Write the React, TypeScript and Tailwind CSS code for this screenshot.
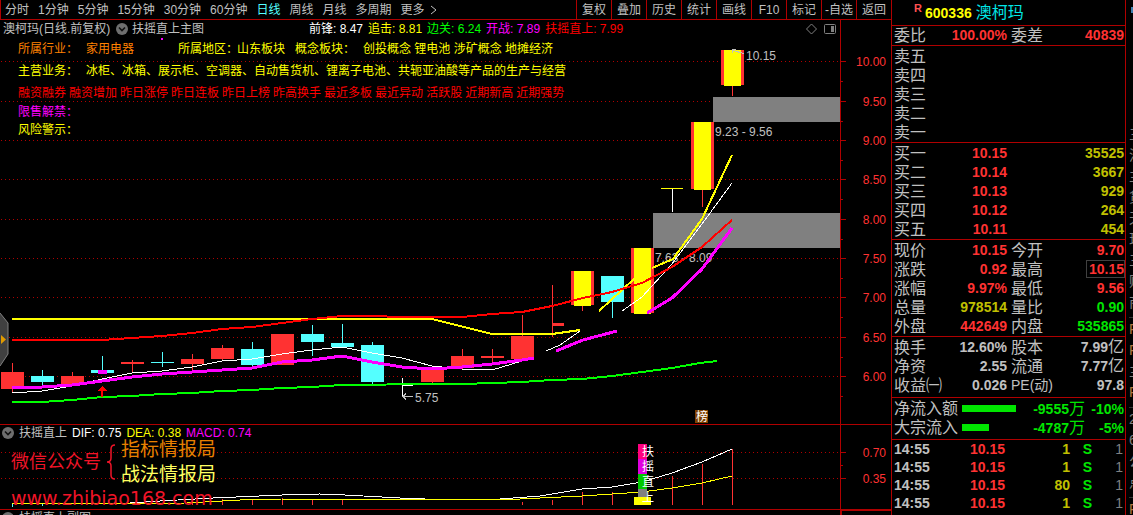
import React from 'react';

const periods = ['分时', '1分钟', '5分钟', '15分钟', '30分钟', '60分钟', '日线', '周线', '月线', '多周期', '更多'];
const tools = ['复权', '叠加', '历史', '统计', '画线', 'F10', '标记', '-自选', '返回'];

const tags = [
  '融资融券', '融资增加', '昨日涨停', '昨日连板', '昨日上榜', '昨高换手',
  '最近多板', '最近异动', '活跃股', '近期新高', '近期强势',
];

const RED = '#ff3232';
const CYAN = '#54ffff';
const LINE = '#b00000';

// cx, body top, body bottom, wick top, wick bottom, colour
type Candle = [number, number, number, number, number, string];

const candles: Candle[] = [
  [12, 372, 389, 363, 393, RED],
  [42, 376, 382, 370, 385, CYAN],
  [72, 376, 385, 372, 385, RED],
  [102, 370, 373, 356, 374, CYAN],
  [132, 362, 364, 360, 373, RED],
  [162, 362, 363, 352, 367, CYAN],
  [192, 359, 364, 354, 371, RED],
  [222, 348, 359, 345, 361, RED],
  [252, 349, 365, 342, 367, CYAN],
  [282, 334, 365, 334, 365, RED],
  [312, 334, 342, 325, 356, CYAN],
  [342, 343, 347, 324, 347, CYAN],
  [372, 345, 382, 342, 384, CYAN],
  [432, 368, 382, 368, 384, RED],
  [462, 356, 368, 349, 370, RED],
  [492, 356, 358, 349, 364, RED],
  [522, 336, 359, 315, 359, RED],
  [582, 271, 305, 271, 311, RED],
  [612, 276, 302, 276, 318, CYAN],
  [642, 248, 313, 248, 313, RED],
  [702, 122, 189, 122, 207, RED],
  [732, 50, 85, 50, 96, RED],
];

// x, top, height of the limit-up bodies
const limitUps = [
  [574, 271, 35],
  [634, 248, 66],
  [694, 122, 68],
  [724, 50, 36],
];

const priceTicks: [number, string][] = [
  [61, '10.00'], [101, '9.50'], [140, '9.00'], [179, '8.50'], [219, '8.00'],
  [258, '7.50'], [297, '7.00'], [337, '6.50'], [376, '6.00'],
];

const mainLines = [
  { color: '#ffff00', width: 2, points: '12,319 432,319 492,334 552,334 580,330' },
  { color: '#ffff00', width: 2, points: '599,311 634,279' },
  { color: '#ffff00', width: 2, points: '652,268 673,259 702,219 732,155' },
  { color: '#00ff00', width: 2, points: '12,402 42,402 72,400 102,397 132,396 162,394 192,393 222,391 252,390 282,388 312,387 342,385 432,384 462,384 522,382 552,380 582,379 612,376 642,372 672,368 700,363 717,361' },
  { color: '#ffffff', width: 1, points: '12,393 42,391 72,386 102,379 132,373 162,371 192,367 222,361 252,359 282,354 312,350 342,347 372,353 402,358 432,366 462,369 492,370 522,361 533,357' },
  { color: '#ffffff', width: 1, points: '546,351 560,345 580,331' },
  { color: '#ffffff', width: 1, points: '622,311 642,297 672,264 702,224 732,183' },
  { color: '#ff0000', width: 2, points: '12,340 102,340 132,338 162,336 192,333 222,329 252,327 282,323 312,319 342,316 372,316 402,317 462,317 492,314 522,312 552,306 583,298 612,292 642,283 672,267 702,247 732,220' },
  { color: '#ff00ff', width: 3, points: '12,388 42,387 72,385 102,381 132,377 162,374 192,372 222,370 252,368 282,362 312,360 342,356 372,362 402,367 432,369 462,367 492,364 522,360 534,358' },
  { color: '#ff00ff', width: 3, points: '556,351 583,340 617,331' },
  { color: '#ff00ff', width: 3, points: '647,313 672,298 702,269 732,228' },
];

const macdBars: [number, number][] = [
  [192, 501], [222, 499], [252, 500], [282, 498], [312, 499], [342, 500], [522, 502],
  [552, 500], [582, 492], [612, 492], [672, 476], [702, 464], [732, 449],
];

function MenuDot() {
  return (
    <svg className="h-3 w-3 shrink-0" viewBox="0 0 12 12">
      <circle cx="6" cy="6" r="6" fill="#6e6e6e" />
      <path d="M3 4.5 6 7.5 9 4.5" fill="none" stroke="#111111" strokeWidth="1.6" />
    </svg>
  );
}

function GridLine({ y }: { y: number }) {
  return <line x1="1" x2="840" y1={y + 0.5} y2={y + 0.5} stroke={LINE} strokeDasharray="1 3" />;
}

function Toolbar() {
  return (
    <nav className="flex h-5 items-stretch justify-between border-b border-l border-[#b00000] text-[#c0c0c0]">
      <div className="flex items-center gap-[9px] whitespace-nowrap pl-1">
        {periods.map((p) => (
          <button key={p} type="button" className={p === '日线' ? 'text-[#54ffff]' : ''}>
            {p}
          </button>
        ))}
        <svg className="-ml-1 h-3 w-2" viewBox="0 0 8 12" fill="none" stroke="#c0c0c0">
          <path d="M1 2 6 6 1 10" />
        </svg>
      </div>
      <div className="flex">
        {tools.map((t) => (
          <button key={t} type="button" className="w-[35px] whitespace-nowrap border-l border-[#b00000] text-center">
            {t}
          </button>
        ))}
      </div>
    </nav>
  );
}

function MainHeader() {
  return (
    <header className="mr-[50px] flex h-[18px] items-center justify-between whitespace-nowrap border-r border-[#b00000] pl-[3px] pr-1">
      <div className="flex items-center text-[#c0c0c0]">
        <h1 className="w-[113px]">澳柯玛(日线.前复权)</h1>
        <MenuDot />
        <span className="ml-1 w-[177px]">扶摇直上主图</span>
        <div className="flex gap-[5px]">
          <span className="text-white">前锋: 8.47</span>
          <span className="text-[#ffff00]">追击: 8.81</span>
          <span className="text-[#00ff00]">边关: 6.24</span>
          <span className="text-[#ff00ff]">开战: 7.89</span>
          <span className="text-[#ff0000]">扶摇直上: 7.99</span>
        </div>
      </div>
      <svg className="h-3 w-[30px]" viewBox="0 0 30 12" fill="none" stroke="#808080">
        <path d="M5.500 1 10.500 6 5.500 11 0.500 6Z" />
        <rect x="18.500" y="1.500" width="11" height="9" rx="1" />
        <rect x="25" y="3" width="3" height="6" fill="#808080" stroke="none" />
      </svg>
    </header>
  );
}

function StockNotes() {
  return (
    <div className="absolute left-[18px] top-px whitespace-nowrap text-[#ffff00]">
      <div className="flex h-5 items-center">
        <span className="w-[68px] text-[#ff8000]">所属行业：</span>
        <span className="w-[92px] text-[#ff8000]">家用电器</span>
        <span className="w-[59px]">所属地区：</span>
        <span className="w-[58px]">山东板块</span>
        <span className="w-[68px]">概念板块：</span>
        <span>创投概念 锂电池 涉矿概念 地摊经济</span>
      </div>
      <div className="flex h-6 items-center">
        <span className="w-[68px]">主营业务：</span>
        <span>冰柜、冰箱、展示柜、空调器、自动售货机、锂离子电池、共轭亚油酸等产品的生产与经营</span>
      </div>
      <div className="flex h-5 items-center gap-[3px] text-[#ff0000]">
        {tags.map((t) => (
          <span key={t}>{t}</span>
        ))}
      </div>
      <div className="flex h-[18px] items-center text-[#ff00ff]">限售解禁：</div>
      <div className="flex h-[18px] items-center">风险警示：</div>
    </div>
  );
}

function MainChart() {
  return (
    <svg className="block h-auto w-full" viewBox="0 38 891 386" fontSize="12">
      <g shapeRendering="crispEdges">
        {priceTicks.map(([y]) => (
          <GridLine key={y} y={y} />
        ))}
        <line x1="840.500" x2="840.500" y1="38" y2="424" stroke={LINE} />
        {priceTicks.map(([y]) => (
          <path key={y} d={`M841 ${y + 0.5}h5M841 ${y + 20.5}h2`} stroke={LINE} />
        ))}
        <rect x="713" y="97" width="127" height="25" fill="#808080" />
        <rect x="653" y="213" width="187" height="35" fill="#808080" />
        <rect x="161" y="38" width="2" height="2" fill="#ff00ff" />
      </g>

      <g fill="#c0c0c0">
        <text x="746" y="60">10.15</text>
        <text x="715" y="136">9.23 - 9.56</text>
        <text x="655" y="262">7.63 - 8.09</text>
        <text x="415" y="402">5.75</text>
      </g>

      <g shapeRendering="crispEdges">
        {candles.map(([cx, top, bottom, high, low, color]) => (
          <g key={cx} fill={color}>
            <rect x={cx} y={high} width="1" height={low - high} />
            <rect x={cx - 11} y={top} width="23" height={bottom - top} />
          </g>
        ))}
        {limitUps.map(([x, y, h]) => (
          <rect key={x} x={x} y={y} width="17" height={h} fill="#ffff00" />
        ))}
        <rect x="98" y="370" width="9" height="4" fill="#ff00ff" />
        <rect x="552" y="285" width="1" height="52" fill={RED} />
        <rect x="552" y="323" width="12" height="3" fill={RED} />
        <path d="M402.500 378v19M402 385.500h11" stroke="#ffffff" />
        <path d="M672.500 189v23" stroke="#ffffff" />
        <path d="M661 188.500h22" stroke="#ffff00" />
        {mainLines.map((l) => (
          <polyline key={l.points} points={l.points} fill="none" stroke={l.color} strokeWidth={l.width} />
        ))}
        <path d="M102 386 107 391H103V397H101V391H97Z" fill="#ff0000" />
        <path d="M413 396.500H403M406 393.500 403 396.500 406 399.500" stroke="#c0c0c0" fill="none" />
        <path d="M744 53.500 733 50.500M736 49.500H732.500V53" stroke="#c0c0c0" fill="none" />
        <rect x="695" y="410" width="13" height="13" fill="#804000" />
      </g>
      <text x="696" y="421" fill="#ffffff">榜</text>

      <path d="M0 313 8 323V354L0 366Z" fill="#404040" />
      <path d="M0 313 8 323V354L0 366" fill="none" stroke="#808080" />
      <path d="M1 335 6 339.500 1 344Z" fill="#e09a00" />

      <g fill={RED} textAnchor="end">
        {priceTicks.map(([y, label]) => (
          <text key={label} x="886" y={y + 5}>{label}</text>
        ))}
      </g>
    </svg>
  );
}

function SubChart() {
  return (
    <svg className="block h-auto w-full" viewBox="0 441 891 68" fontSize="12">
      <g shapeRendering="crispEdges">
        <GridLine y={452} />
        <GridLine y={478} />
        <line x1="840.500" x2="840.500" y1="441" y2="509" stroke={LINE} />
        <path d="M841 452.500h5M841 465.500h2M841 478.500h5" stroke={LINE} />
        <rect x="12" y="503" width="1" height="4" fill={CYAN} />
        <rect x="42" y="504" width="1" height="2" fill={CYAN} />
        {macdBars.map(([x, y]) => (
          <rect key={x} x={x} y={y} width="1" height={505 - y} fill={RED} />
        ))}
        <polyline
          points="12,504 130,503 160,501 213,498 282,495 320,494 345,495 400,498 450,500 500,499 540,496 582,489 612,487 642,482 672,473 702,462 732,449"
          fill="none"
          stroke="#ffffff"
        />
        <polyline
          points="12,504 187,503 240,500 282,499 400,499 500,500 540,498 582,496 612,494 642,492 672,488 702,483 732,476"
          fill="none"
          stroke="#ffff00"
        />
        <rect x="638" y="444" width="9" height="15" fill="#ff0080" />
        <rect x="638" y="459" width="9" height="15" fill="#e000e0" />
        <rect x="638" y="474" width="9" height="15" fill="#00c800" />
        <rect x="638" y="489" width="9" height="8" fill="#808080" />
        <rect x="634" y="497" width="17" height="8" fill="#ffff00" />
      </g>
      <g fill="#ffffff">
        <text x="642" y="456">扶</text>
        <text x="642" y="471">摇</text>
        <text x="642" y="486">直</text>
        <text x="642" y="502">上</text>
      </g>
      <g fill={RED} textAnchor="end">
        <text x="886" y="457">0.70</text>
        <text x="886" y="483">0.35</text>
      </g>
    </svg>
  );
}

function Watermark() {
  return (
    <div className="absolute left-[11px] top-3 whitespace-nowrap text-[#f01428]">
      <div className="flex items-center">
        <span className="text-[18px] leading-6">微信公众号</span>
        <svg className="mx-1 h-9 w-3" viewBox="0 0 12 36" fill="none" stroke="#f01428" strokeWidth="1.5">
          <path d="M10 1Q6 1 6 5V14Q6 18 2 18Q6 18 6 22V31Q6 35 10 35" />
        </svg>
        <div className="text-[19px] leading-[25px]">
          <p className="text-[#e88000]">指标情报局</p>
          <p className="text-[#ffff60]">战法情报局</p>
        </div>
      </div>
      <p className="font-['DejaVu_Sans',sans-serif] text-[19px] leading-[22px]">www.zhibiao168.com</p>
    </div>
  );
}

interface Cell {
  text: string;
  color: string;
  unit?: string;
  boxed?: boolean;
}

interface QuoteRow {
  label: string;
  value?: Cell;
  label2?: string;
  value2?: Cell;
}

const red = 'text-[#ff3232]';
const olive = 'text-[#c0c000]';
const green = 'text-[#00e600]';
const gray = 'text-[#c0c0c0]';

const entrust: QuoteRow[] = [
  { label: '委比', value: { text: '100.00%', color: red }, label2: '委差', value2: { text: '40839', color: red } },
];

const sells: QuoteRow[] = ['卖五', '卖四', '卖三', '卖二', '卖一'].map((label) => ({ label }));

const buys: QuoteRow[] = [
  { label: '买一', value: { text: '10.15', color: red }, value2: { text: '35525', color: olive } },
  { label: '买二', value: { text: '10.14', color: red }, value2: { text: '3667', color: olive } },
  { label: '买三', value: { text: '10.13', color: red }, value2: { text: '929', color: olive } },
  { label: '买四', value: { text: '10.12', color: red }, value2: { text: '264', color: olive } },
  { label: '买五', value: { text: '10.11', color: red }, value2: { text: '454', color: olive } },
];

const quotes: QuoteRow[] = [
  { label: '现价', value: { text: '10.15', color: red }, label2: '今开', value2: { text: '9.70', color: red } },
  { label: '涨跌', value: { text: '0.92', color: red }, label2: '最高', value2: { text: '10.15', color: red, boxed: true } },
  { label: '涨幅', value: { text: '9.97%', color: red }, label2: '最低', value2: { text: '9.56', color: red } },
  { label: '总量', value: { text: '978514', color: olive }, label2: '量比', value2: { text: '0.90', color: green } },
  { label: '外盘', value: { text: '442649', color: red }, label2: '内盘', value2: { text: '535865', color: green } },
];

const finance: QuoteRow[] = [
  { label: '换手', value: { text: '12.60%', color: gray }, label2: '股本', value2: { text: '7.99', color: gray, unit: '亿' } },
  { label: '净资', value: { text: '2.55', color: gray }, label2: '流通', value2: { text: '7.77', color: gray, unit: '亿' } },
  { label: '收益㈠', value: { text: '0.026', color: gray }, label2: 'PE(动)', value2: { text: '97.8', color: gray } },
];

const flows = [
  { label: '净流入额', amount: 9555, pct: '-10%' },
  { label: '大宗流入', amount: 4787, pct: '-5%' },
];

const trades = [1, 1, 80, 1];

function QuoteCell({ cell }: { cell?: Cell }) {
  if (!cell) return null;
  return (
    <span className={`font-bold ${cell.color} ${cell.boxed ? 'pl-0.5 outline outline-1 outline-[#404040]' : ''}`}>
      {cell.text}
      {cell.unit && <span className="text-base font-normal leading-none">{cell.unit}</span>}
    </span>
  );
}

function QuoteTable({ rows, className = '' }: { rows: QuoteRow[]; className?: string }) {
  return (
    <div className={`border-b border-[#b00000] ${className}`}>
      <table className="w-full table-fixed border-collapse text-sm leading-[19px]">
        <tbody>
          {rows.map((row) => (
            <tr key={row.label} className="h-[19px]">
              <th scope="row" className="h-[19px] w-[50px] whitespace-nowrap p-0 pl-0.5 text-left align-middle text-base font-normal leading-[19px] text-[#c0c0c0]">
                {row.label}
              </th>
              <td className="w-[65px] whitespace-nowrap p-0 text-right leading-[19px]">
                <QuoteCell cell={row.value} />
              </td>
              <td className={`w-[50px] whitespace-nowrap p-0 pl-1 leading-[19px] text-[#c0c0c0] ${row.label2 === 'PE(动)' ? 'text-sm' : 'text-base leading-[19px]'}`}>
                {row.label2}
              </td>
              <td className="whitespace-nowrap p-0 pr-px text-right leading-[19px]">
                <QuoteCell cell={row.value2} />
              </td>
            </tr>
          ))}
        </tbody>
      </table>
    </div>
  );
}

function QuotePanel() {
  return (
    <aside className="w-[235px] shrink-0 border-x border-[#b00000] bg-black">
      <div className="flex h-[26px] items-center border-b border-[#b00000] pl-[22px]">
        <span className="mb-2 w-[11px] text-[11px] font-bold leading-none text-[#ff5050]">R</span>
        <span className="text-sm font-bold text-[#ffff00]">600336</span>
        <h2 className="ml-1 text-base text-[#00e6e6]">澳柯玛</h2>
      </div>
      <QuoteTable rows={entrust} />
      <QuoteTable rows={sells} className="pt-px" />
      <QuoteTable rows={buys} className="pt-px" />
      <QuoteTable rows={quotes} className="pt-px" />
      <QuoteTable rows={finance} className="pb-0.5 pt-px" />
      <div className="border-b border-[#b00000] pb-0.5 pt-px">
        {flows.map((f) => (
          <div key={f.label} className="flex h-[19px] items-center whitespace-nowrap pl-0.5 pr-px text-sm font-bold leading-none text-[#00e600]">
            <span className="w-[68px] text-base font-normal leading-none text-[#c0c0c0]">{f.label}</span>
            <span className="w-[54px]">
              <span className="block h-[7px] bg-[#00e600]" style={{ width: `${(f.amount / 9555) * 100}%` }} />
            </span>
            <span className="flex-1 text-right">
              -{f.amount}
              <span className="text-base font-normal leading-none">万</span>
            </span>
            <span className="w-[39px] text-right">{f.pct}</span>
          </div>
        ))}
      </div>
      <table className="w-full table-fixed border-collapse text-sm font-bold leading-[18px]">
        <tbody>
          {trades.map((volume, i) => (
            <tr key={i} className="h-[18px]">
              <td className="w-[50px] p-0 pl-0.5 text-[#c0c0c0]">14:55</td>
              <td className="w-[63px] p-0 text-right text-[#ff3232]">10.15</td>
              <td className="w-[65px] p-0 text-right text-[#c0c000]">{volume}</td>
              <td className="w-[22px] p-0 text-right text-[#00e600]">S</td>
              <td className="p-0 pr-0.5 text-right font-normal text-[#808080]">1</td>
            </tr>
          ))}
        </tbody>
      </table>
    </aside>
  );
}

const sideGroups = [
  ['三', '沈', '主', '货', '天', '现', '三', '财', '商'],
  ['F', 'F', '主', 'F'],
  ['2', '6', '公', '点'],
  ['F'],
];

function SideStrip() {
  return (
    <div className="w-[7px] shrink-0 overflow-hidden bg-black pl-[3px] pt-[7px] text-sm text-[#808080]">
      <div className="ml-0.5 h-[6px] w-4 bg-[#4080b0]" />
      <div className="pt-[110px]">
        {sideGroups.map((group, g) => (
          <div key={g} className="w-5 border-b border-[#303030] pb-1 pt-px">
            {group.map((c, i) => (
              <div key={i} className={`h-[21px] leading-[21px] ${c === 'F' ? 'text-[#b07840]' : ''}`}>{c}</div>
            ))}
          </div>
        ))}
      </div>
    </div>
  );
}

export default function App() {
  return (
    <div className="flex h-screen overflow-hidden bg-black font-['Liberation_Sans','Noto_Sans_CJK_SC',sans-serif] text-xs leading-none">
      <main className="min-w-0 flex-1">
        <Toolbar />
        <section className="border-b border-[#b00000]">
          <MainHeader />
          <div className="relative">
            <MainChart />
            <StockNotes />
          </div>
        </section>
        <section className="relative border-b border-[#b00000]">
          <header className="mr-[50px] flex h-4 items-center gap-[5px] whitespace-nowrap border-r border-[#b00000] pl-0.5">
            <MenuDot />
            <span className="text-[#c0c0c0]">扶摇直上</span>
            <span className="text-white">DIF: 0.75</span>
            <span className="text-[#ffff00]">DEA: 0.38</span>
            <span className="text-[#ff00ff]">MACD: 0.74</span>
          </header>
          <SubChart />
          <Watermark />
        </section>
        <section className="flex">
          <header className="flex h-4 flex-1 items-center gap-[5px] pl-0.5 text-[#c0c0c0]">
            <MenuDot />
            <span>扶摇直上副图</span>
          </header>
          <div className="w-[51px] border-l-2 border-t border-[#b00000]" />
        </section>
      </main>
      <QuotePanel />
      <SideStrip />
    </div>
  );
}
